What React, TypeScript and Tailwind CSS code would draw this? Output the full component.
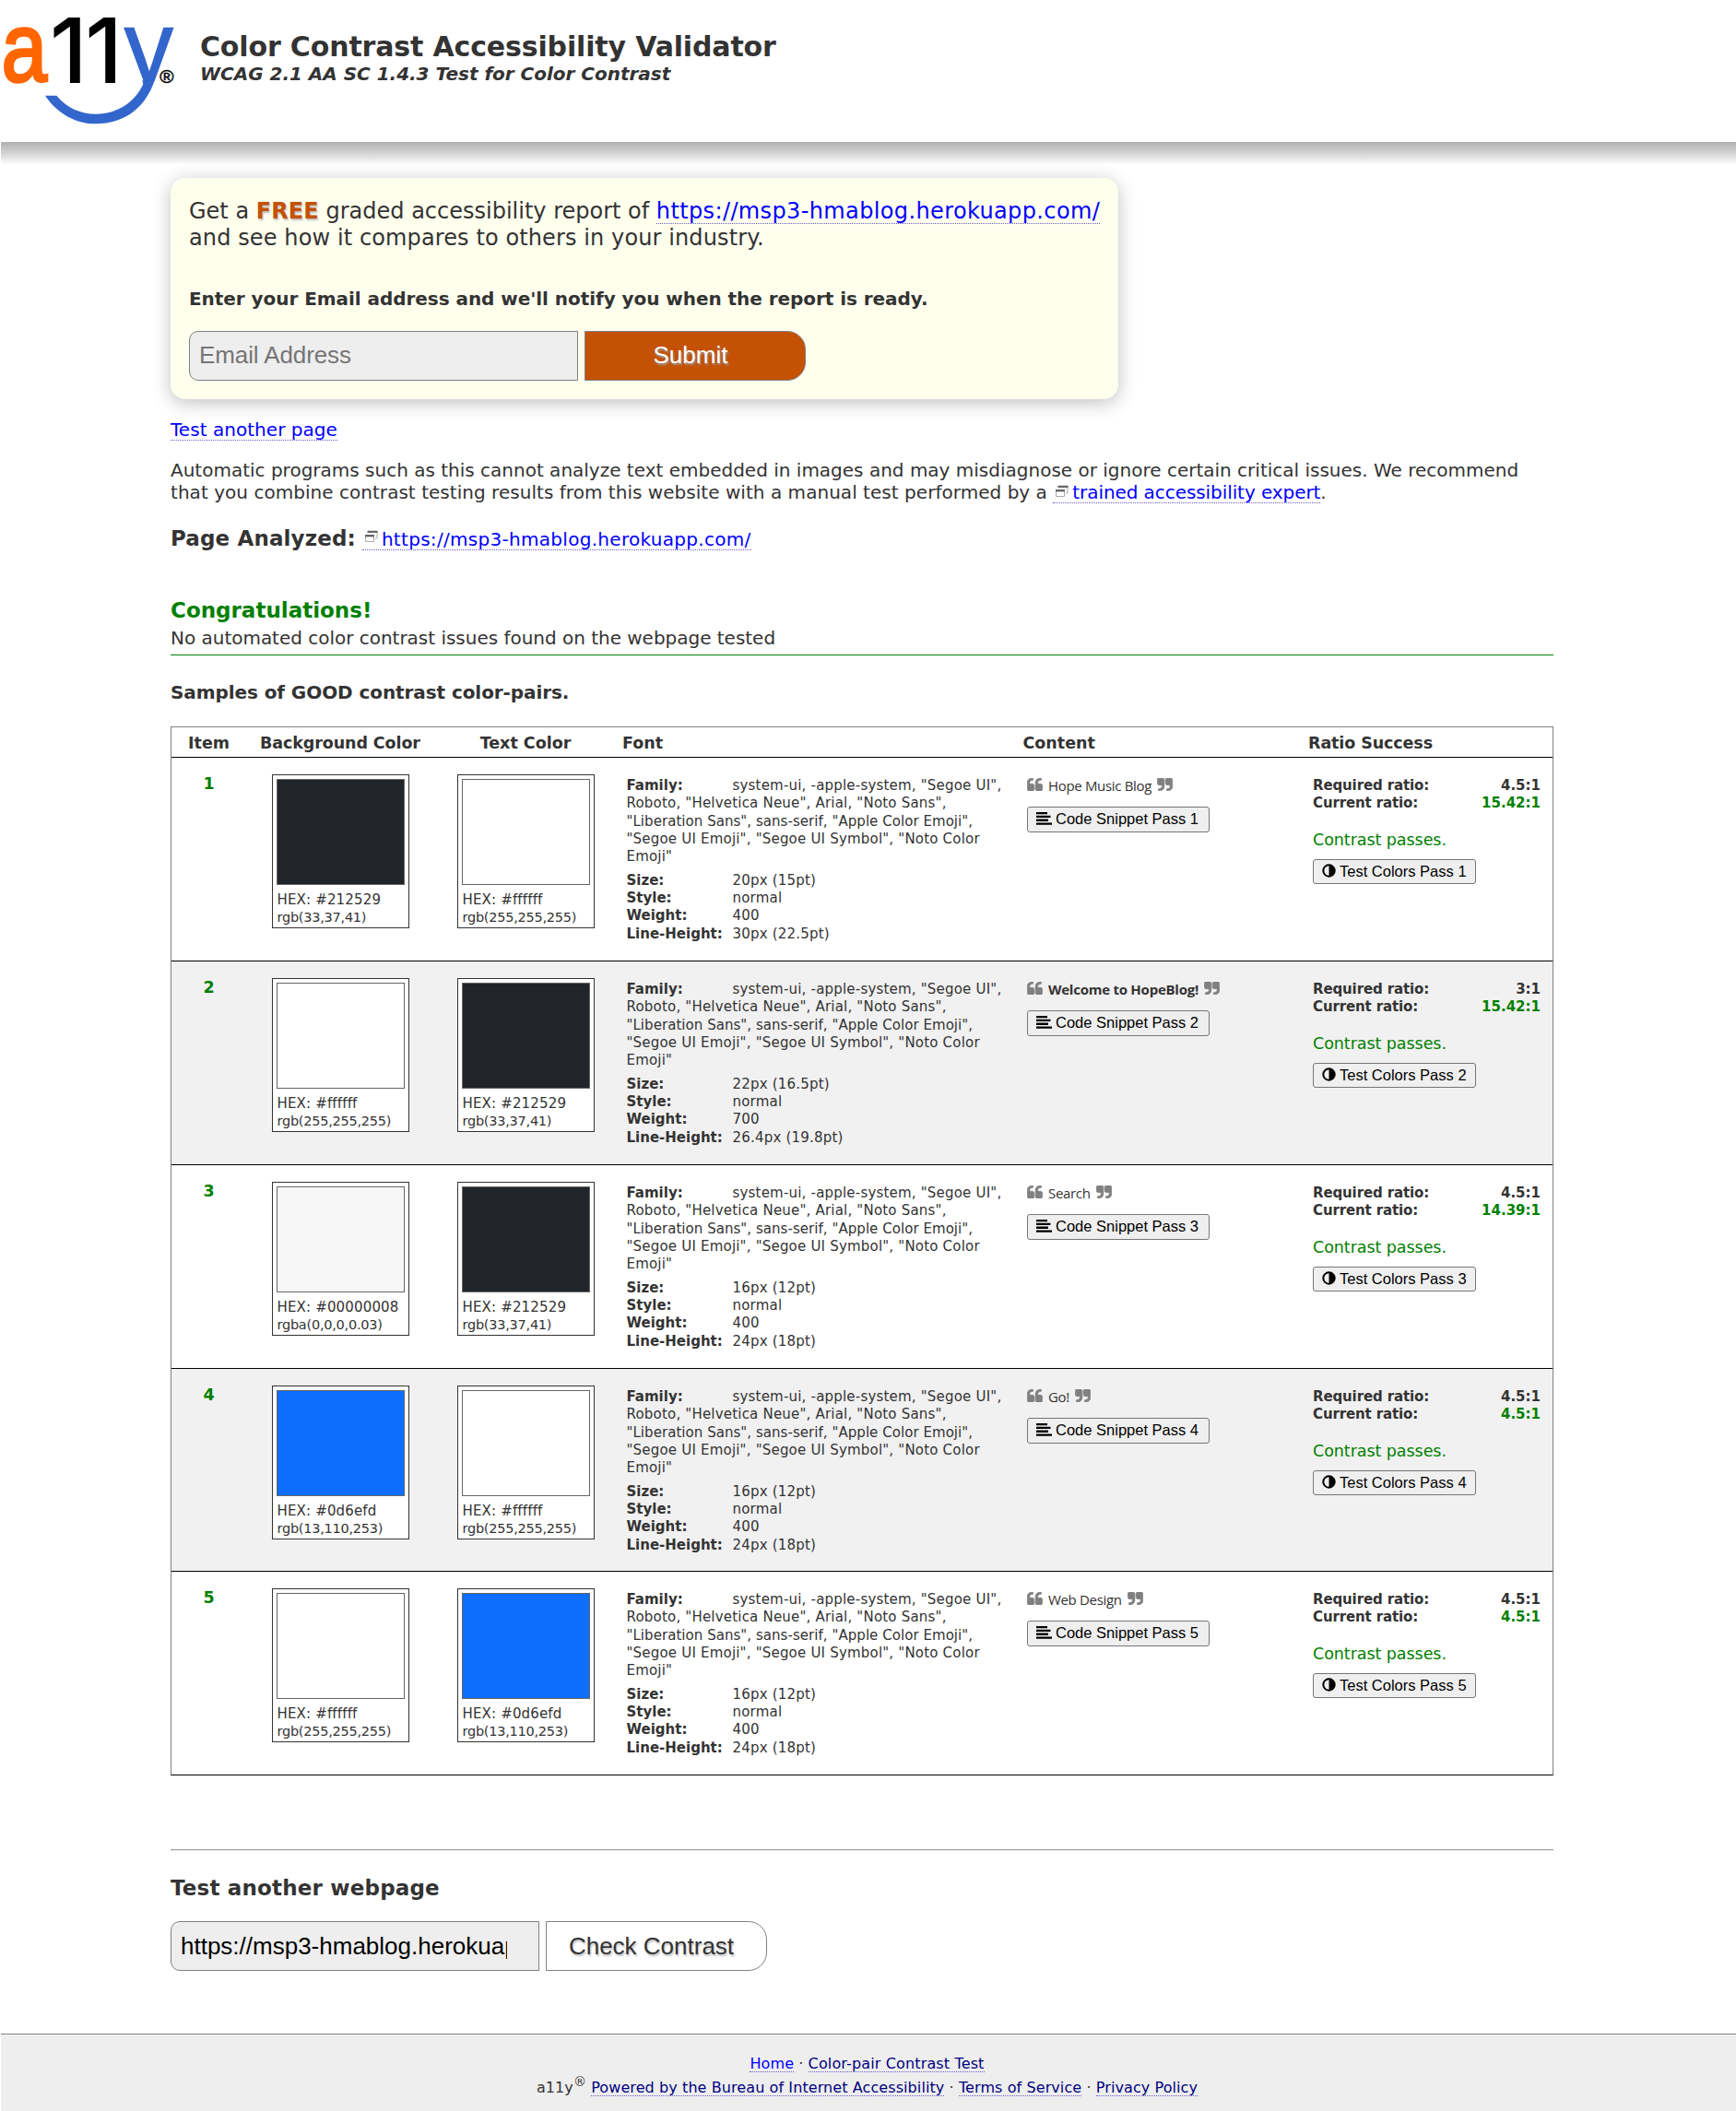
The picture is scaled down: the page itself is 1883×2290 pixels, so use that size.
import React from "react";

type Row = {
  bg: string;
  bgHex: string;
  bgRgb: string;
  fg: string;
  fgHex: string;
  fgRgb: string;
  size: string;
  weight: string;
  lineHeight: string;
  content: string;
  bold?: boolean;
  required: string;
  current: string;
  height: string;
};

const rows: Row[] = [
  { bg: "bg-[#212529]", bgHex: "#212529", bgRgb: "rgb(33,37,41)", fg: "bg-white", fgHex: "#ffffff", fgRgb: "rgb(255,255,255)", size: "20px (15pt)", weight: "400", lineHeight: "30px (22.5pt)", content: "Hope Music Blog", required: "4.5:1", current: "15.42:1", height: "h-[221px]" },
  { bg: "bg-white", bgHex: "#ffffff", bgRgb: "rgb(255,255,255)", fg: "bg-[#212529]", fgHex: "#212529", fgRgb: "rgb(33,37,41)", size: "22px (16.5pt)", weight: "700", lineHeight: "26.4px (19.8pt)", content: "Welcome to HopeBlog!", bold: true, required: "3:1", current: "15.42:1", height: "h-[221px]" },
  { bg: "bg-[#f7f7f7]", bgHex: "#00000008", bgRgb: "rgba(0,0,0,0.03)", fg: "bg-[#212529]", fgHex: "#212529", fgRgb: "rgb(33,37,41)", size: "16px (12pt)", weight: "400", lineHeight: "24px (18pt)", content: "Search", required: "4.5:1", current: "14.39:1", height: "h-[221px]" },
  { bg: "bg-[#0d6efd]", bgHex: "#0d6efd", bgRgb: "rgb(13,110,253)", fg: "bg-white", fgHex: "#ffffff", fgRgb: "rgb(255,255,255)", size: "16px (12pt)", weight: "400", lineHeight: "24px (18pt)", content: "Go!", required: "4.5:1", current: "4.5:1", height: "h-[220px]" },
  { bg: "bg-white", bgHex: "#ffffff", bgRgb: "rgb(255,255,255)", fg: "bg-[#0d6efd]", fgHex: "#0d6efd", fgRgb: "rgb(13,110,253)", size: "16px (12pt)", weight: "400", lineHeight: "24px (18pt)", content: "Web Design", required: "4.5:1", current: "4.5:1", height: "h-[221px]" },
];

const columns = "grid grid-cols-[81px_204px_198px_435px_310px_270px]";

function Logo({ className }: { className: string }) {
  return (
    <svg viewBox="0 0 600 420" className={className} aria-label="a11y">
      <defs>
        <clipPath id="y-top">
          <rect x="390" y="80" width="200" height="184" />
        </clipPath>
      </defs>
      <text transform="translate(5 263) scale(0.84 1)" fontFamily="Liberation Sans" fontSize="316" fill="#ff6600" stroke="#ff6600" strokeWidth="10">a</text>
      <g fontFamily="Inter" fontWeight="500" fontSize="294" fill="#000">
        <text x="162" y="271">1</text>
        <text x="277" y="271">1</text>
      </g>
      <g clipPath="url(#y-top)">
        <text transform="translate(404 271) scale(0.94 1)" fontFamily="Liberation Sans" fontSize="339" fill="#3366cc" stroke="#3366cc" strokeWidth="4">y</text>
      </g>
      <path d="M147 311H184C215 350 262 371 313 371C385 371 440 330 466 274L463 262H503C472 355 400 403 313 403C245 403 185 368 147 311Z" fill="#3366cc" />
      <text x="520" y="271" fontFamily="Liberation Sans" fontSize="62" fill="#000" stroke="#000" strokeWidth="1.5">®</text>
    </svg>
  );
}

function WindowIcon({ className }: { className: string }) {
  return (
    <svg viewBox="0 0 15 14" className={className}>
      <path d="M4 1h10v8h-2" fill="none" stroke="#aaa" />
      <path d="M3.5 1h11v2h-11z" fill="#666" />
      <path d="M1.5 5.5h9v7h-9z" fill="#fff" stroke="#aaa" />
      <path d="M1 5h10v2.4H1z" fill="#666" />
    </svg>
  );
}

const quoteMark =
  "M768 960v384q0 80-56 136t-136 56H192q-80 0-136-56t-56-136V640q0-104 40.5-198.5T150 278 313.5 168.5 512 128h64q26 0 45 19t19 45v128q0 26-19 45t-45 19h-64q-106 0-181 75t-75 181v32q0 40 28 68t68 28h224q80 0 136 56t56 136z";

function QuoteIcon({ className }: { className: string }) {
  return (
    <svg viewBox="0 128 1664 1408" className={className} fill="#808080" stroke="#808080" strokeWidth="70">
      <path d={quoteMark} />
      <path transform="translate(896 0)" d={quoteMark} />
    </svg>
  );
}

function Swatch({ fill, hex, rgb }: { fill: string; hex: string; rgb: string }) {
  return (
    <div className="mx-auto h-[167px] w-[149px] border border-[#333] bg-white p-1">
      <div className={`h-[115px] border border-[#666] ${fill}`} />
      <div className="mt-1.5 pl-px text-[15px] leading-[20px] tracking-[0.16px] whitespace-nowrap">HEX: {hex}</div>
      <div className="pl-px text-[14.5px] leading-[18px] tracking-[-0.25px] whitespace-nowrap">{rgb}</div>
    </div>
  );
}

function Spec({ label, value }: { label: string; value: string }) {
  return (
    <div className="flex">
      <span className="w-[115px] font-bold tracking-normal">{label}</span>
      <span>{value}</span>
    </div>
  );
}

function ResultRow({ row, index }: { row: Row; index: number }) {
  const n = index + 1;
  return (
    <div className={`${columns} ${row.height} border-t border-black ${index % 2 ? "bg-[#f1f1f1]" : ""}`}>
      <div className="pt-4 text-center text-[17.5px] leading-6 font-bold text-[#008000]">{n}</div>
      <div className="pt-[18px]">
        <Swatch fill={row.bg} hex={row.bgHex} rgb={row.bgRgb} />
      </div>
      <div className="pt-[18px]">
        <Swatch fill={row.fg} hex={row.fgHex} rgb={row.fgRgb} />
      </div>
      <div className="pt-[21px] pr-2.5 pl-[10.5px] text-[15px] leading-[19.3px] tracking-[0.2px]">
        <p>
          <span className="float-left h-[19px] w-[115px] font-bold tracking-normal">Family:</span>
          system-ui, -apple-system, "Segoe UI", Roboto, "Helvetica Neue", Arial, "Noto Sans", <span className="tracking-[0.05px]">"Liberation Sans", sans-serif, "Apple Color Emoji",</span> "Segoe UI Emoji", "Segoe UI Symbol", "Noto Color Emoji"
        </p>
        <div className="mt-[6.2px]">
          <Spec label="Size:" value={row.size} />
          <Spec label="Style:" value="normal" />
          <Spec label="Weight:" value={row.weight} />
          <Spec label="Line-Height:" value={row.lineHeight} />
        </div>
      </div>
      <div className="pt-[20px] pl-[10px]">
        <div className="flex h-5 items-center text-[15px] leading-5">
          <QuoteIcon className="h-3.5 w-[17px] -translate-y-px" />
          {row.bold ? (
            <span className="mx-[6px] font-['Open_Sans'] font-bold tracking-[-0.25px]">{row.content}</span>
          ) : (
            <span className="mx-[6px] font-['Open_Sans'] tracking-[-0.33px]">{row.content}</span>
          )}
          <QuoteIcon className="h-3.5 w-[17px] -translate-y-px rotate-180" />
        </div>
        <button className="mt-[13px] flex h-7 w-[198px] items-center rounded-[3px] border border-[#767676] bg-[#efefef] pl-[9px] font-['Liberation_Sans'] text-[16.5px] leading-6 whitespace-nowrap text-black">
          <svg viewBox="0 0 17 14" className="mr-[4px] h-3.5 w-[17px] shrink-0 -translate-y-px">
            <path d="M0 0h12v2.3H0zM0 3.8h15.5v2.3H0zM0 7.6h13v2.3H0zM0 11.4h17v2.3H0z" fill="#000" />
          </svg>
          <span className="-translate-y-px">Code Snippet Pass {n}</span>
        </button>
      </div>
      <div className="pt-[21px] pr-[13px] pl-[10px]">
        <div className="text-[15px] leading-[19.3px] font-bold">
          <div className="flex justify-between">
            <span className="tracking-[-0.13px]">Required ratio:</span>
            <span>{row.required}</span>
          </div>
          <div className="flex justify-between">
            <span className="tracking-[-0.13px]">Current ratio:</span>
            <span className="text-[#008000]">{row.current}</span>
          </div>
        </div>
        <div className="mt-[17.5px] text-[17.5px] leading-6 tracking-[-0.06px] text-[#008000]">Contrast passes.</div>
        <button className="mt-[9px] flex h-[27px] w-[177px] items-center rounded-[3px] border border-[#767676] bg-[#efefef] pl-[9px] font-['Liberation_Sans'] text-[16.5px] leading-6 whitespace-nowrap text-black">
          <svg viewBox="0 0 15 15" className="mr-[4px] size-[15px] shrink-0 -translate-y-px">
            <circle cx="7.5" cy="7.5" r="6.2" fill="none" stroke="#000" strokeWidth="2" />
            <path d="M7.5 1.5a6 6 0 0 1 0 12z" fill="#000" />
          </svg>
          <span className="-translate-y-px">Test Colors Pass {n}</span>
        </button>
      </div>
    </div>
  );
}

const link20 = "inline-block border-b border-dotted border-[#6a5acd] leading-[22px] text-[#0000ff]";
const footLink = "inline-block border-b border-dotted border-[#6a5acd] leading-[17px]";

export default function App() {
  return (
    <div className="h-[2290px] w-[1883px] bg-white font-['DejaVu_Sans',sans-serif] text-[20px] leading-6 text-[#333]">
      <header className="flex h-[154px]">
        <Logo className="h-[140px] w-[200px] shrink-0 overflow-visible" />
        <div className="pt-[33px] pl-[17px]">
          <h1 className="text-[30px] leading-[35px] font-bold tracking-[-0.15px]">Color Contrast Accessibility Validator</h1>
          <p className="font-bold italic tracking-[-0.02px]">WCAG 2.1 AA SC 1.4.3 Test for Color Contrast</p>
        </div>
      </header>
      <div className="ml-px h-[26px] bg-linear-to-b from-[#b0b0b0] via-[#d6d6d6] via-50% to-white to-95%" />

      <main className="ml-[185px] w-[1500px] pt-[13px]">
        <section className="h-[240px] w-[1028px] rounded-2xl bg-[#ffffee] pt-[22px] pl-5 shadow-[0_4px_20px_rgba(0,0,0,0.25)]">
          <p className="text-[24px] leading-[29px] whitespace-nowrap">
            Get a <b className="tracking-[0.1px] text-[#c45104] [text-shadow:1px_2px_2px_#bbb]">FREE</b> graded accessibility report of{" "}
            <a className="inline-block border-b border-dotted border-[#6a5acd] leading-[26px] tracking-[0.37px] text-[#0000ff]">https://msp3-hmablog.herokuapp.com/</a>
            <br />
            <span className="tracking-[0.11px]">and see how it compares to others in your industry.</span>
          </p>
          <p className="mt-[39px] font-bold tracking-[-0.05px]">Enter your Email address and we'll notify you when the report is ready.</p>
          <div className="mt-[23px] flex gap-[7px] font-['Liberation_Sans'] text-[26px]">
            <input className="h-[54px] w-[422px] rounded-l-[10px] border border-[#808080] bg-[#eee] px-[10px] pb-0.5 tracking-[-0.1px] placeholder:text-[#757575] placeholder:opacity-100" placeholder="Email Address" />
            <button className="h-[54px] w-[240px] rounded-r-[20px] border border-[#808080] bg-[#c45104] pr-[10px] pb-0.5 text-center text-white [text-shadow:1px_2px_2px_#999]">Submit</button>
          </div>
        </section>

        <p className="mt-[21px] h-6">
          <a className={`${link20} tracking-[0.04px]`}>Test another page</a>
        </p>
        <p className="mt-5 h-12 whitespace-nowrap">
          Automatic programs such as this cannot analyze text embedded in images and may misdiagnose or ignore certain critical issues. We recommend
          <br />
          <span className="tracking-[0.035px]">that you combine contrast testing results from this website with a manual test performed by a </span>
          <a className={`${link20} tracking-[-0.075px]`}>
            <WindowIcon className="mr-1 ml-[2px] inline-block h-3.5 w-[15px] align-[1px]" />
            trained accessibility expert
          </a>
          .
        </p>
        <div className="mt-6 flex h-7 items-baseline leading-7">
          <h2 className="text-[23px] font-bold tracking-[0.13px]">Page Analyzed:</h2>
          <a className={`${link20} ml-[7px] tracking-[0.3px]`}>
            <WindowIcon className="mr-1 ml-[2px] inline-block h-3.5 w-[15px] align-[3px]" />
            https://msp3-hmablog.herokuapp.com/
          </a>
        </div>
        <section className="mt-[50px] border-b border-[#008000] pb-1.5">
          <h2 className="text-[23px] leading-7 font-bold text-[#008000]">Congratulations!</h2>
          <p className="mt-1 tracking-[-0.02px]">No automated color contrast issues found on the webpage tested</p>
        </section>
        <h3 className="mt-7 font-bold tracking-[-0.08px]">Samples of GOOD contrast color-pairs.</h3>

        <section className="mt-[25px] border border-[#808080] border-b-black">
          <div className={`${columns} h-8 pt-0.5 text-[17.5px] leading-[30px] font-bold`}>
            <div className="text-center">Item</div>
            <div className="text-center tracking-[-0.1px]">Background Color</div>
            <div className="text-center">Text Color</div>
            <div className="pl-1.5">Font</div>
            <div className="pl-[5.5px]">Content</div>
            <div className="pl-[5px] tracking-[-0.1px]">Ratio Success</div>
          </div>
          {rows.map((row, i) => (
            <ResultRow key={i} row={row} index={i} />
          ))}
        </section>

        <hr className="mt-20 h-0.5 border-t border-b border-t-[#9a9a9a] border-b-[#eee]" />
        <h2 className="mt-[26px] text-[23px] leading-7 font-bold tracking-[0.18px]">Test another webpage</h2>
        <div className="mt-[22px] flex gap-[7px] font-['Liberation_Sans'] text-[26px]">
          <div className="flex h-[54px] w-[400px] items-center rounded-l-[10px] border border-[#808080] bg-[#eee] pl-[10px] text-black">
            <span className="w-[354px] overflow-hidden leading-8 whitespace-nowrap">https://msp3-hmablog.herokuapp.com/</span>
          </div>
          <button className="h-[54px] w-[240px] rounded-r-[20px] border border-[#808080] bg-white pr-[11px] text-center [text-shadow:1px_2px_2px_#bbb]">Check Contrast</button>
        </div>
      </main>

      <footer className="mt-[68px] ml-px h-[84px] border-t border-[#808080] bg-[#eee] pt-[19px] text-center text-[16px] leading-[26px] tracking-[0.09px]">
        <div className="h-[26px] pr-[3px]">
          <a className={`${footLink} text-[#0000ff]`}>Home</a> · <a className={`${footLink} tracking-[0.14px] text-[#000080]`}>Color-pair Contrast Test</a>
        </div>
        <div className="h-[26px] pr-[3px]">
          a11y<sup className="text-[14px] leading-none">®</sup> <a className={`${footLink} text-[#000080]`}>Powered by the Bureau of Internet Accessibility</a> · <a className={`${footLink} text-[#000080]`}>Terms of Service</a> · <a className={`${footLink} text-[#000080]`}>Privacy Policy</a>
        </div>
      </footer>
    </div>
  );
}
